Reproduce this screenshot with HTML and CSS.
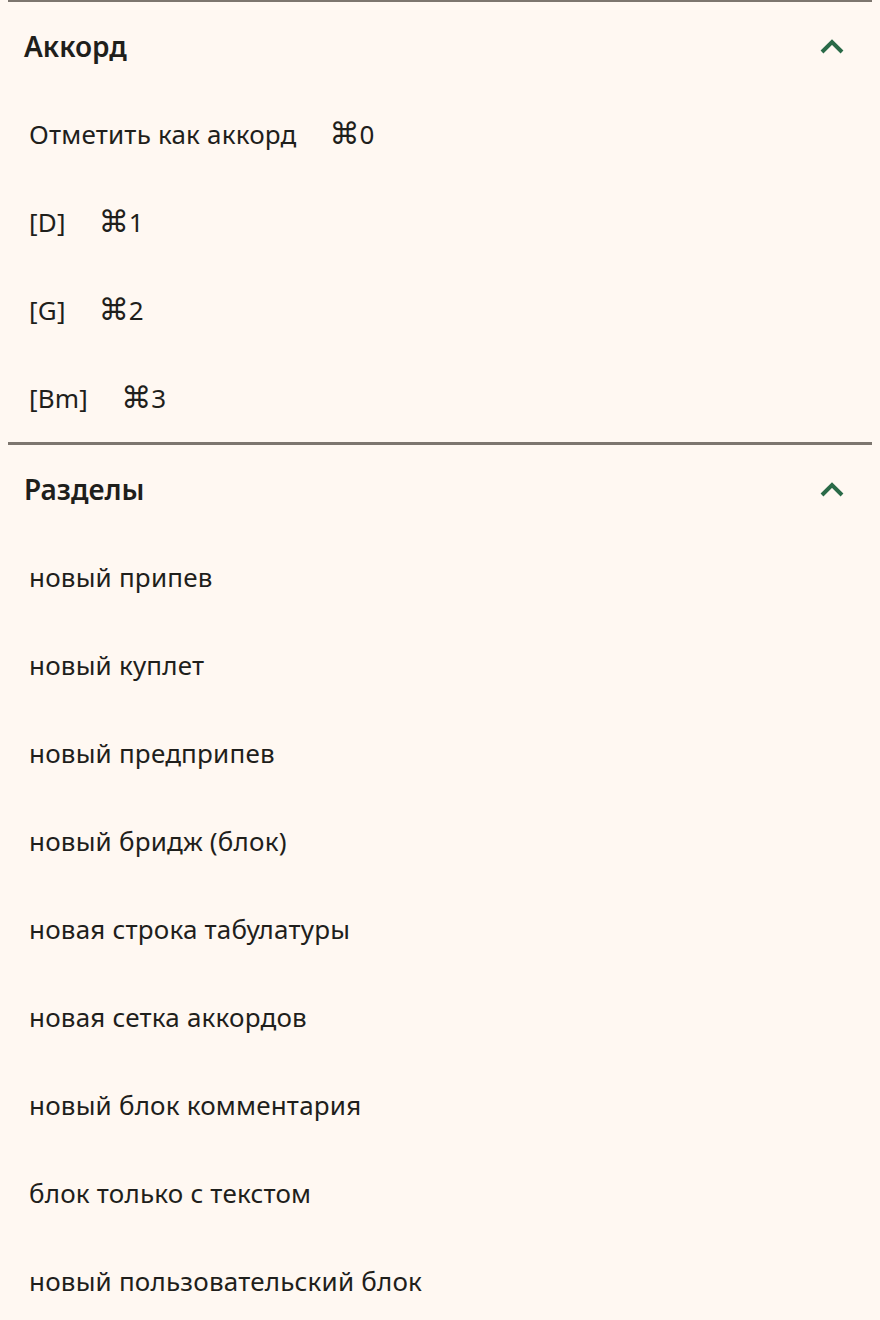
FILE: index.html
```html
<!DOCTYPE html>
<html lang="ru">
<head>
  <meta charset="UTF-8" />
  <meta name="viewport" content="width=device-width, initial-scale=1.0" />
  <title>Вставка</title>
  <link rel="stylesheet" href="styles.css">
</head>
<body>
  <div class="sheet">
    <section class="group">
      <div class="group-head">
        <h2 class="group-title">Аккорд</h2>
        <svg class="chevron" width="24" height="16" viewBox="0 0 24 16">
          <polyline points="2,14 12,4 22,14" />
        </svg>
      </div>
      <ul class="group-list">
        <li class="item">Отметить как аккорд <span class="shortcut"><span class="cmd">⌘</span>0</span></li>
        <li class="item">[D] <span class="shortcut"><span class="cmd">⌘</span>1</span></li>
        <li class="item">[G] <span class="shortcut"><span class="cmd">⌘</span>2</span></li>
        <li class="item">[Bm] <span class="shortcut"><span class="cmd">⌘</span>3</span></li>
      </ul>
    </section>

    <section class="group">
      <div class="group-head">
        <h2 class="group-title">Разделы</h2>
        <svg class="chevron" width="24" height="16" viewBox="0 0 24 16">
          <polyline points="2,14 12,4 22,14" />
        </svg>
      </div>
      <ul class="group-list">
        <li class="item">новый припев</li>
        <li class="item">новый куплет</li>
        <li class="item">новый предприпев</li>
        <li class="item">новый бридж (блок)</li>
        <li class="item">новая строка табулатуры</li>
        <li class="item">новая сетка аккордов</li>
        <li class="item">новый блок комментария</li>
        <li class="item">блок только с текстом</li>
        <li class="item">новый пользовательский блок</li>
      </ul>
    </section>
  </div>
</body>
</html>
```

FILE: styles.css
```css
body {
    margin: 0;
    background-color: #fff8f2;
    font-family: "Noto Sans", "DejaVu Sans", sans-serif;
    color: #1f1f1c;
}

.sheet {
    margin-top: -1px;
}

.group {
    margin: 0 8px;
    border-top: 3px solid #7d766f;
}

.group-head {
    height: 88px;
    display: flex;
    align-items: center;
    justify-content: space-between;
    padding: 0 28px 0 16px;
}

.group-title {
    margin: 0;
    font-size: 28px;
    font-weight: 600;
}

.chevron {
    fill: none;
    stroke: #2a6a48;
    stroke-width: 4;
}

.group-list {
    list-style: none;
    margin: 0;
    padding: 0;
}

.item {
    height: 88px;
    display: flex;
    align-items: center;
    padding-left: 21px;
    font-size: 26px;
    letter-spacing: 0.2px;
}

.shortcut {
    margin-left: 33px;
    display: flex;
    align-items: center;
    letter-spacing: 0;
}

.cmd {
    font-family: "DejaVu Sans", sans-serif;
    font-size: 30px;
    line-height: 1;
}
```
